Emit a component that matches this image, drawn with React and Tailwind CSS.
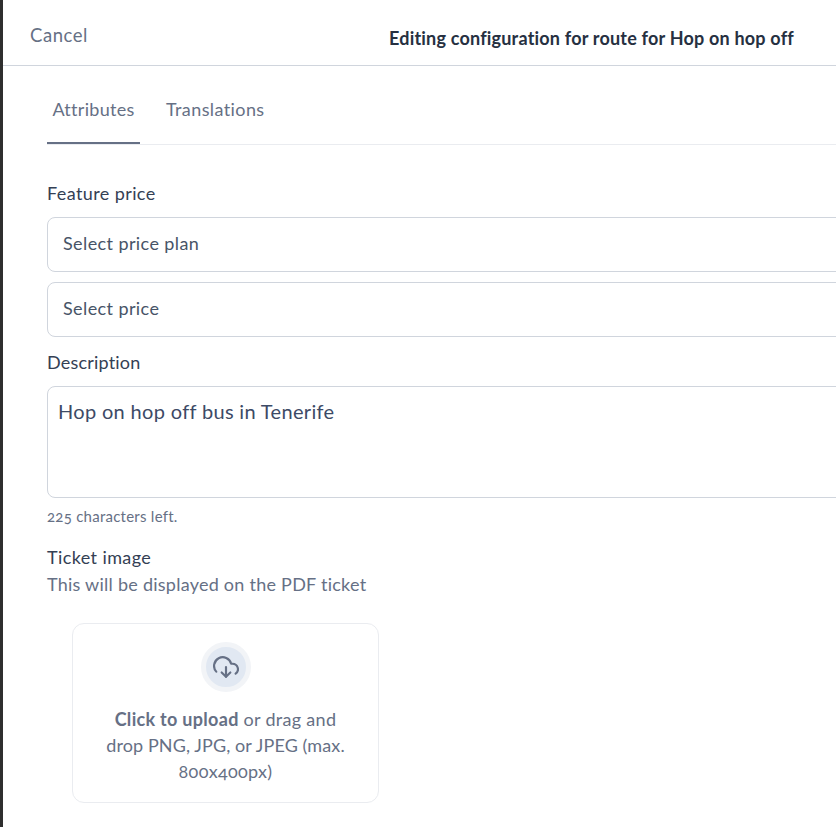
export default function App() {
  return (
    <div className="flex h-[827px] w-[836px] overflow-hidden bg-white font-['Lato','Noto_Sans',sans-serif] oldstyle-nums">
      <div className="w-[3px] shrink-0 bg-[#2e2e2e]" />
      <div className="min-w-0 flex-1">
        <header className="flex h-[66px] border-b border-[#d0d5dd]">
          <button className="ml-[27px] h-[70px] self-start text-[18.5px] tracking-[0.55px] leading-[70px] text-[#667085]">Cancel</button>
          <h1 className="ml-[301px] mt-[26px] whitespace-nowrap text-[18px] tracking-[0.2px] leading-[24px] font-bold text-[#263041]">Editing configuration for route for Hop on hop off</h1>
        </header>
        <main className="pl-[44px]">
          <nav className="flex h-[79px] w-[900px] gap-[26px] border-b border-[#eaecf0]">
            <div className="h-[78px] w-[93px] border-b-2 border-[#667085] pt-[30px] text-center text-[18px] tracking-[0.3px] leading-[27px] text-[#667085]">Attributes</div>
            <div className="pt-[30px] text-[18px] tracking-[0.4px] leading-[27px] text-[#667085]">Translations</div>
          </nav>
          <label className="mt-[35px] block text-[18px] tracking-[0.4px] leading-[26px] text-[#344054]">Feature price</label>
          <div className="mt-[11px] flex h-[55px] w-[900px] items-center rounded-lg border border-[#d0d5dd] pb-[2px] pl-[15px] text-[18px] tracking-[0.4px] text-[#475467]">Select price plan</div>
          <div className="mt-[10px] flex h-[55px] w-[900px] items-center rounded-lg border border-[#d0d5dd] pb-[2px] pl-[15px] text-[18px] tracking-[0.4px] text-[#475467]">Select price</div>
          <label className="mt-[12px] block text-[18px] tracking-[0.2px] leading-[26px] text-[#344054]">Description</label>
          <div className="mt-[11px] h-[112px] w-[900px] rounded-lg border border-[#d0d5dd] pl-[10px] pt-[9px] text-[20px] tracking-[0.33px] leading-[30px] text-[#3d4a66]">Hop on hop off bus in Tenerife</div>
          <p className="mt-[8px] text-[15px] tracking-[0.25px] leading-[21px] text-[#667085]">225 characters left.</p>
          <label className="mt-[17px] block text-[18px] tracking-[0.4px] leading-[26px] text-[#344054]">Ticket image</label>
          <p className="mt-[1px] text-[18px] tracking-[0.25px] leading-[26px] text-[#667085]">This will be displayed on the PDF ticket</p>
          <div className="ml-[25px] mt-[26px] flex h-[180px] w-[307px] flex-col items-center rounded-xl border border-[#eaecf0] px-[28px] pt-[18px]">
            <div className="flex h-[50px] w-[50px] items-center justify-center rounded-full border-[5px] border-[#f2f4f7] bg-[#e1e8f2]">
              <svg width="26" height="26" viewBox="0 0 24 24" fill="none" stroke="#667085" strokeWidth="2" strokeLinecap="round" strokeLinejoin="round">
                <path d="M8 17l4 4 4-4" />
                <path d="M12 12v9" />
                <path d="M20.88 18.09A5 5 0 0 0 18 9h-1.26A8 8 0 1 0 3 16.29" />
              </svg>
            </div>
            <p className="mt-[14px] text-center text-[18px] tracking-[0.3px] leading-[26px] text-[#667085]"><b className="font-bold">Click to upload</b> or drag and <span className="tracking-[0.1px]">drop PNG, JPG, or JPEG (max.</span> 800x400px)</p>
          </div>
        </main>
      </div>
    </div>
  );
}
